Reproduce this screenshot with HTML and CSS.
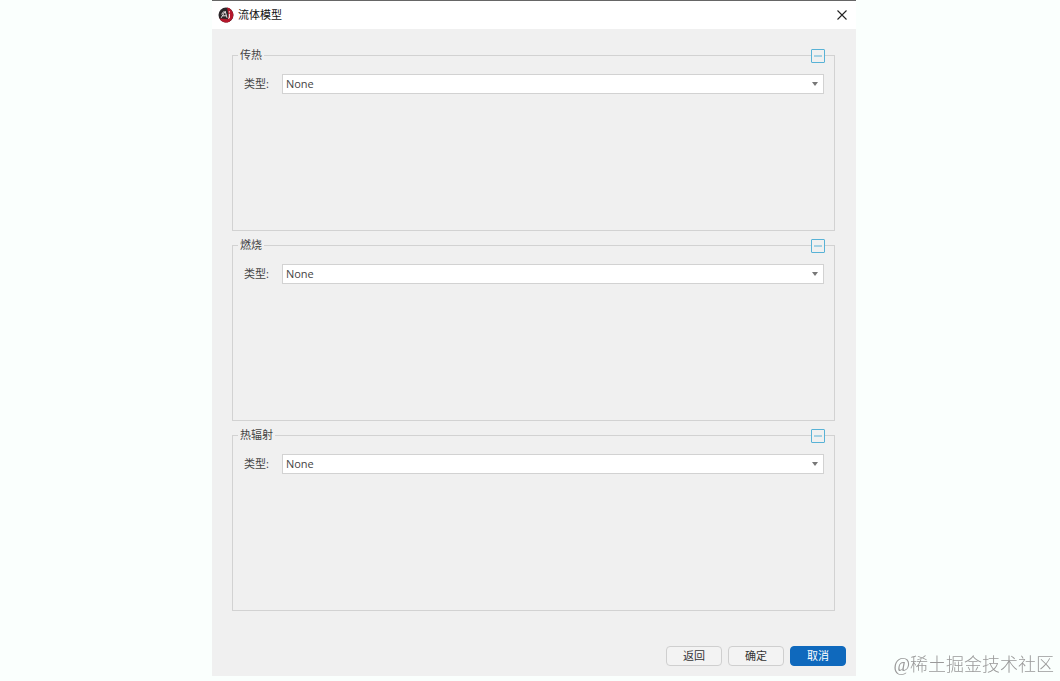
FILE: index.html
```html
<!DOCTYPE html>
<html lang="zh-CN">
<head>
  <meta charset="UTF-8">
  <meta name="viewport" content="width=device-width, initial-scale=1.0">
  <title>流体模型</title>
  <link rel="stylesheet" href="styles.css">
</head>
<body>

  <main class="dialog">
    <header class="titlebar">
      <svg class="logo" viewBox="0 0 16 16" width="16" height="16" aria-hidden="true">
        <circle cx="8" cy="8" r="7.5" fill="#2b2629"/>
        <path d="M9 .6A7.5 7.5 0 0 1 9 15.4L10.5 8z" fill="#b5172b"/>
        <path d="M1.4 11.5A7.5 7.5 0 0 0 12 14.3L9 12z" fill="#b5172b"/>
        <path d="M3.2 10.8L7.2 4.2L9 10.8M4.6 8.8H8M5.8 4.4L3.6 7.4" fill="none" stroke="#e8dfe0" stroke-width="1"/>
        <path d="M11.4 6.8V10.6L10.3 11.6M11.4 4.3V5.5" fill="none" stroke="#f2dfe0" stroke-width="1.2"/>
      </svg>
      <h1>流体模型</h1>
      <button class="close" type="button" aria-label="关闭">
        <svg viewBox="0 0 10 10" width="10" height="10"><path d="M.5 .5L9.5 9.5M9.5 .5L.5 9.5" fill="none" stroke="#222" stroke-width="1.1"/></svg>
      </button>
    </header>

    <form class="content">
      <fieldset class="group">
        <legend>传热</legend>
        <button class="toggle" type="button" aria-label="折叠传热">
          <svg viewBox="0 0 14 14" width="14" height="14"><rect x=".5" y=".5" width="13" height="13" rx=".5"/><path d="M3 7H11"/></svg>
        </button>
        <div class="row">
          <label for="heat">类型:</label>
          <div class="select">
            <select id="heat"><option>None</option></select>
          </div>
        </div>
      </fieldset>

      <fieldset class="group">
        <legend>燃烧</legend>
        <button class="toggle" type="button" aria-label="折叠燃烧">
          <svg viewBox="0 0 14 14" width="14" height="14"><rect x=".5" y=".5" width="13" height="13" rx=".5"/><path d="M3 7H11"/></svg>
        </button>
        <div class="row">
          <label for="combustion">类型:</label>
          <div class="select">
            <select id="combustion"><option>None</option></select>
          </div>
        </div>
      </fieldset>

      <fieldset class="group">
        <legend>热辐射</legend>
        <button class="toggle" type="button" aria-label="折叠热辐射">
          <svg viewBox="0 0 14 14" width="14" height="14"><rect x=".5" y=".5" width="13" height="13" rx=".5"/><path d="M3 7H11"/></svg>
        </button>
        <div class="row">
          <label for="radiation">类型:</label>
          <div class="select">
            <select id="radiation"><option>None</option></select>
          </div>
        </div>
      </fieldset>
    </form>

    <footer class="actions">
      <button class="botao" type="button">返回</button>
      <button class="botao" type="button">确定</button>
      <button class="botao primary" type="button">取消</button>
    </footer>
  </main>

  <div class="watermark">@稀土掘金技术社区</div>

</body>
</html>
```

FILE: styles.css
```css
* {
  box-sizing: border-box;
}

body {
  margin: 0;
  padding-left: 8px;
  background-color: #fafffd;
  color: #444;
  font-family: "Open Sans", "Noto Sans CJK SC", sans-serif;
  font-size: 11px;
  line-height: 16px;
}

button {
  padding: 0;
  font: inherit;
  cursor: pointer;
}

svg {
  display: block;
}

.dialog {
  width: 100%;
  max-width: 644px;
  margin: 0 auto;
  background-color: #f0f0f0;
}

.titlebar {
  display: flex;
  align-items: center;
  gap: 4px;
  height: 29px;
  padding: 0 9px 0 6px;
  border-top: 1px solid #666;
  background-color: #fff;
}

.titlebar h1 {
  margin: 0;
  color: #111;
  font-size: 11px;
  font-weight: 400;
}

.close {
  margin-left: auto;
  border: none;
  background: none;
}

.content {
  display: flex;
  flex-direction: column;
  gap: 6px;
  padding: 18px 21px 0 20px;
}

.group {
  position: relative;
  min-width: 0;
  min-height: 184px;
  margin: 0;
  padding: 11px 10px 0 11px;
  border: 1px solid #d2d2d2;
}

.group legend {
  margin-left: -6px;
  padding: 0 2px;
}

/* sits on top of the group border */
.toggle {
  position: absolute;
  top: -14px;
  right: 9px;
  border: none;
  background-color: #f0f0f0;
}

.toggle svg {
  fill: none;
  stroke: #58b2d6;
}

.row {
  display: flex;
  align-items: center;
  gap: 13px;
}

.select {
  position: relative;
  flex: 1;
}

.select::after {
  content: "";
  position: absolute;
  top: 8px;
  right: 6px;
  border: 3px solid transparent;
  border-top: 4px solid #777;
  border-bottom: none;
  pointer-events: none;
}

.select select {
  display: block;
  width: 100%;
  height: 20px;
  padding: 0 3px;
  border: 1px solid #d2d2d2;
  border-radius: 0;
  appearance: none;
  background-color: #fff;
  color: #444;
  font: inherit;
}

.actions {
  display: flex;
  justify-content: flex-end;
  gap: 6px;
  padding: 35px 10px 10px;
}

.botao {
  width: 56px;
  height: 20px;
  border: 1px solid #cfcfcf;
  border-radius: 4px;
  background-color: #f3f3f3;
  color: #333;
}

.primary {
  border-color: #0f69bd;
  background-color: #0f69bd;
  color: #fff;
}

.watermark {
  position: fixed;
  right: 6px;
  bottom: 3px;
  color: #999;
  font-family: "Liberation Serif", "Noto Sans CJK SC", serif;
  font-size: 18px;
  font-weight: 300;
  line-height: 26px;
}
```
